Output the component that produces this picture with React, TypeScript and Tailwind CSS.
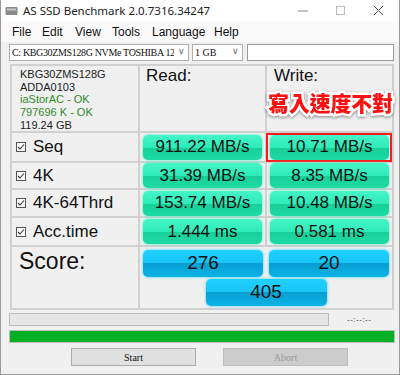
import React from 'react';

const sans = { fontFamily: '"Liberation Sans", Arial, sans-serif' };
const ui = { fontFamily: '"Noto Sans", "Liberation Sans", sans-serif' };
const serif = { fontFamily: '"Liberation Serif", "Noto Sans CJK TC", serif' };

type Row = { label: string; read: string; write: string; h: string; mark?: boolean };

const rows: Row[] = [
  { label: 'Seq', read: '911.22 MB/s', write: '10.71 MB/s', h: 'h-[30px]', mark: true },
  { label: '4K', read: '31.39 MB/s', write: '8.35 MB/s', h: 'h-[27px]' },
  { label: '4K-64Thrd', read: '153.74 MB/s', write: '10.48 MB/s', h: 'h-[28px]' },
  { label: 'Acc.time', read: '1.444 ms', write: '0.581 ms', h: 'h-[29px]' },
];

const menu = [
  { t: 'File', w: 'w-[30px]' },
  { t: 'Edit', w: 'w-[33px]' },
  { t: 'View', w: 'w-[37px]' },
  { t: 'Tools', w: 'w-[40px]' },
  { t: 'Language', w: 'w-[62px]' },
  { t: 'Help', w: 'w-[40px]' },
];

const GreenPill = ({ text }: { text: string }) => (
  <div className="flex-1 mx-[3px] h-[25px] rounded-[5px] flex items-center justify-center text-[17px] text-[#111] shadow-[0_0_3px_#3ff0c0] bg-[linear-gradient(to_bottom,#45f5c8_0%,#2eecb8_50%,#17cf98_50%,#1edba4_100%)]">
    {text}
  </div>
);

const BluePill = ({ text, w }: { text: string; w: string }) => (
  <div
    className={`${w} h-[27px] rounded-[5px] flex items-center justify-center text-[19px] text-[#111] shadow-[0_0_3px_#2fd3ff] bg-[linear-gradient(to_bottom,#20d2ff_0%,#16c4f6_50%,#079fd2_50%,#0db3e6_100%)]`}
  >
    {text}
  </div>
);

const Check = () => (
  <svg width="10" height="10" viewBox="0 0 10 10" className="shrink-0">
    <rect x="0.5" y="0.5" width="9" height="9" fill="#fff" stroke="#555" />
    <path d="M2 5 L4 7 L8 2.5" fill="none" stroke="#333" strokeWidth="1.1" />
  </svg>
);

export default function App() {
  return (
    <div className="w-[400px] h-[375px] bg-[#f0f0f0] border-x border-b border-[#9a9a9a] flex flex-col overflow-hidden" style={ui}>
      {/* title bar */}
      <div className="h-[22px] bg-white flex items-center shrink-0">
        <svg width="14" height="12" viewBox="0 0 14 12" className="ml-[4px]">
          <rect x="0.5" y="2" width="12" height="8" rx="1" fill="#8a8a8a" />
          <rect x="2" y="3.5" width="9" height="2" fill="#c8c8c8" />
        </svg>
        <span className="ml-[4px] text-[11.5px] text-[#222]">AS SSD Benchmark 2.0.7316.34247</span>
        <div className="ml-auto flex items-center">
          <svg width="38" height="22" viewBox="0 0 38 22">
            <path d="M14 11 H24" stroke="#888" strokeWidth="1" />
          </svg>
          <svg width="38" height="22" viewBox="0 0 38 22">
            <rect x="14.5" y="6.5" width="8" height="8" fill="none" stroke="#bbb" />
          </svg>
          <svg width="38" height="22" viewBox="0 0 38 22" className="mr-[1px]">
            <path d="M14 6 L23 15 M23 6 L14 15" stroke="#555" strokeWidth="1" />
          </svg>
        </div>
      </div>

      {/* menu */}
      <div className="h-[20px] bg-[#fafafa] flex items-center text-[12px] text-[#111] shrink-0 pl-[11px]" style={sans}>
        {menu.map((m) => (
          <span key={m.t} className={m.w}>
            {m.t}
          </span>
        ))}
      </div>

      {/* drive row */}
      <div className="h-[20px] flex items-center shrink-0">
        <div className="ml-[8px] w-[180px] h-[17px] bg-white border border-[#b0b0b0] flex items-center text-[10px] text-[#111] overflow-hidden" style={serif}>
          <span className="pl-[2px] whitespace-nowrap overflow-hidden flex-1 tracking-[-0.35px]">C: KBG30ZMS128G NVMe TOSHIBA 12</span>
          <span className="w-[14px] text-[#666] text-[9px] text-center shrink-0" style={sans}>∨</span>
        </div>
        <div className="ml-[3px] w-[51px] h-[17px] bg-white border border-[#b0b0b0] flex items-center text-[10px] text-[#111]" style={serif}>
          <span className="pl-[2px] flex-1">1 GB</span>
          <span className="w-[14px] text-[#666] text-[9px] text-center" style={sans}>∨</span>
        </div>
        <div className="ml-[4px] w-[147px] h-[17px] bg-white border border-[#9a9a9a]" />
      </div>

      {/* results table */}
      <div className="mt-[2px] ml-[9px] w-[384px] border-l-2 border-t-2 border-[#d0d0d0]" style={sans}>
        {/* header */}
        <div className="flex h-[67px] border-b-2 border-[#d0d0d0]">
          <div className="w-[128px] border-r-2 border-[#d0d0d0] pl-[8px] pt-[2px] text-[11px] leading-[12.7px] text-[#222]">
            <div>KBG30ZMS128G</div>
            <div>ADDA0103</div>
            <div className="text-[#2e8b2e]">iaStorAC - OK</div>
            <div className="text-[#2e8b2e]">797696 K - OK</div>
            <div>119.24 GB</div>
          </div>
          <div className="w-[127px] border-r-2 border-[#d0d0d0] pl-[6px] pt-[1px] text-[17px] leading-[18px] text-[#111]">Read:</div>
          <div className="relative flex-1 border-r-2 border-[#d0d0d0] pl-[7px] pt-[1px] text-[17px] leading-[18px] text-[#111]">
            Write:
            <span
              className="absolute left-[1px] top-[25px] text-[21px] leading-[22px] font-black text-[#ff1010] tracking-[-0.2px] whitespace-nowrap [-webkit-text-stroke:5px_white] [paint-order:stroke_fill] drop-shadow-[0_1px_1.5px_rgba(0,0,0,0.45)]"
              style={{ fontFamily: '"Noto Sans CJK TC", "Noto Sans CJK SC", sans-serif' }}
            >
              寫入速度不對
            </span>
          </div>
        </div>

        {rows.map((r) => (
          <div key={r.label} className={`flex ${r.h} border-b-2 border-[#d0d0d0]`}>
            <div className="w-[128px] border-r-2 border-[#d0d0d0] flex items-center pl-[4px] gap-[7px] text-[17px] text-[#111]">
              <Check />
              <span>{r.label}</span>
            </div>
            <div className="w-[127px] border-r-2 border-[#d0d0d0] flex items-center">
              <GreenPill text={r.read} />
            </div>
            <div className="relative flex-1 border-r-2 border-[#d0d0d0] flex items-center">
              <GreenPill text={r.write} />
              {r.mark && <div className="absolute left-[-1px] right-0 top-[0px] bottom-[-1px] border-2 border-[#ff1a1a]" />}
            </div>
          </div>
        ))}

        {/* score */}
        <div className="flex h-[63px] border-b-2 border-[#d0d0d0]">
          <div className="w-[128px] border-r-2 border-[#d0d0d0] pl-[7px] pt-[1px] text-[23px] leading-[26px] text-[#111]">Score:</div>
          <div className="flex-1 border-r-2 border-[#d0d0d0] flex flex-col items-center pt-[3px] gap-[2px]">
            <div className="flex w-full px-[3px] gap-[6px]">
              <BluePill text="276" w="w-[120px]" />
              <BluePill text="20" w="w-[120px]" />
            </div>
            <BluePill text="405" w="w-[121px]" />
          </div>
        </div>
      </div>

      {/* progress */}
      <div className="flex items-center mt-[3px] shrink-0">
        <div className="ml-[8px] w-[320px] h-[13px] bg-[#e6e6e6] border border-[#bcbcbc]" />
        <span className="ml-[18px] text-[8px] text-[#333] tracking-[0.5px]" style={sans}>--:--:--</span>
      </div>
      <div className="ml-[8px] mt-[4px] w-[386px] h-[13px] bg-[#06b025] border border-[#bcbcbc] shrink-0" />

      {/* buttons */}
      <div className="flex mt-[5px] shrink-0">
        <div className="ml-[70px] w-[125px] h-[18px] bg-[#e1e1e1] border border-[#adadad] flex items-center justify-center text-[10px] text-[#111]" style={serif}>
          Start
        </div>
        <div className="ml-[27px] w-[125px] h-[18px] bg-[#cccccc] border border-[#bfbfbf] flex items-center justify-center text-[10px] text-[#9a9a9a]" style={serif}>
          Abort
        </div>
      </div>
    </div>
  );
}
